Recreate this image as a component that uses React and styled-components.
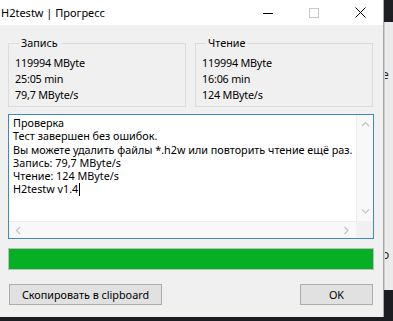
import React from "react";
import styled, { createGlobalStyle } from "styled-components";

const GlobalStyle = createGlobalStyle`
  html, body {
    margin: 0;
    padding: 0;
    background: #1c1d20;
  }
  * {
    box-sizing: border-box;
  }
`;

const writeStats = ["119994 MByte", "25:05 min", "79,7 MByte/s"];
const readStats = ["119994 MByte", "16:06 min", "124 MByte/s"];

const logLines = [
  "Проверка",
  "Тест завершен без ошибок.",
  "Вы можете удалить файлы *.h2w или повторить чтение ещё раз.",
  "Запись: 79,7 MByte/s",
  "Чтение: 124 MByte/s",
];

const Chevron = ({ dir }) => {
  const paths = {
    up: "M1 5 L4.5 1.5 L8 5",
    down: "M1 1.5 L4.5 5 L8 1.5",
    left: "M5 1 L1.5 4.5 L5 8",
    right: "M1.5 1 L5 4.5 L1.5 8",
  };
  const vertical = dir === "up" || dir === "down";
  return (
    <svg
      width={vertical ? 9 : 7}
      height={vertical ? 7 : 9}
      viewBox={vertical ? "0 0 9 7" : "0 0 7 9"}
      fill="none"
      stroke="#c2c2c2"
      strokeWidth="1.2"
    >
      <path d={paths[dir]} />
    </svg>
  );
};

const App = () => {
  return (
    <>
      <GlobalStyle />
      <Screen>
        <Window>
          <TitleBar>
            <Title>H2testw | Прогресс</Title>
            <CaptionButton>
              <svg width="10" height="10" viewBox="0 0 10 10">
                <path d="M0 5.5 H10" stroke="#000" strokeWidth="1" />
              </svg>
            </CaptionButton>
            <CaptionButton>
              <svg width="10" height="10" viewBox="0 0 10 10">
                <rect x="0.5" y="0.5" width="9" height="9" fill="none" stroke="#c8c8c8" />
              </svg>
            </CaptionButton>
            <CaptionButton>
              <svg width="11" height="11" viewBox="0 0 11 11">
                <path d="M0.5 0.5 L10.5 10.5 M10.5 0.5 L0.5 10.5" stroke="#000" strokeWidth="1" />
              </svg>
            </CaptionButton>
          </TitleBar>

          <Body>
            <GroupRow>
              <Group>
                <Legend>Запись</Legend>
                {writeStats.map((s) => (
                  <StatLine key={s}>{s}</StatLine>
                ))}
              </Group>
              <Group>
                <Legend>Чтение</Legend>
                {readStats.map((s) => (
                  <StatLine key={s}>{s}</StatLine>
                ))}
              </Group>
            </GroupRow>

            <Memo>
              <MemoText>
                {logLines.map((l) => (
                  <LogLine key={l}>{l}</LogLine>
                ))}
                <LogLine>
                  H2testw v1.4
                  <Caret />
                </LogLine>
              </MemoText>
              <VScroll>
                <Chevron dir="up" />
                <Chevron dir="down" />
              </VScroll>
              <HScroll>
                <Chevron dir="left" />
                <Chevron dir="right" />
              </HScroll>
              <Corner />
            </Memo>

            <Progress>
              <ProgressFill style={{ width: "100%" }} />
            </Progress>

            <ButtonRow>
              <Button $wide>Скопировать в clipboard</Button>
              <Button>OK</Button>
            </ButtonRow>
          </Body>
        </Window>

        <Backdrop>
          <BackdropTop />
          <BackdropPane>
            <PeekChar $top={46}>e</PeekChar>
            <PeekChar $top={226}>o</PeekChar>
          </BackdropPane>
        </Backdrop>
      </Screen>
    </>
  );
};

export default App;

const Screen = styled.div`
  display: flex;
  width: 393px;
  height: 321px;
  overflow: hidden;
  background: #1c1d20;
  font-family: "Segoe UI", "Noto Sans", sans-serif;
  font-size: 10.8px;
  color: #000;
`;

const Window = styled.div`
  width: 384px;
  height: 317px;
  flex-shrink: 0;
  display: flex;
  flex-direction: column;
  background: #f0f0f0;
  border-right: 1px solid #a9a9a9;
`;

const TitleBar = styled.div`
  height: 25px;
  display: flex;
  align-items: center;
  background: #ffffff;
`;

const Title = styled.div`
  flex: 1;
  padding-left: 1px;
  font-size: 11px;
  line-height: 25px;
  white-space: nowrap;
`;

const CaptionButton = styled.div`
  width: 46px;
  height: 25px;
  display: flex;
  align-items: center;
  justify-content: center;
`;

const Body = styled.div`
  flex: 1;
  display: flex;
  flex-direction: column;
  padding: 11px 9px 0 8px;
`;

const GroupRow = styled.div`
  display: grid;
  grid-template-columns: 178px 178px;
  column-gap: 9px;
`;

const Group = styled.fieldset`
  margin: 0;
  padding: 5px 0 3px 6px;
  border: 1px solid #dcdcdc;
  min-width: 0;
`;

const Legend = styled.legend`
  margin-left: 4px;
  padding: 0 3px 0 2px;
  line-height: 14px;
`;

const StatLine = styled.div`
  line-height: 16px;
  white-space: nowrap;
  letter-spacing: -0.2px;
`;

const Memo = styled.div`
  margin-top: 7px;
  height: 125px;
  width: 366px;
  display: grid;
  grid-template-columns: 1fr 17px;
  grid-template-rows: 1fr 17px;
  border: 1px solid #3c8cc0;
  background: #ffffff;
`;

const MemoText = styled.div`
  padding: 1px 0 0 4px;
  overflow: hidden;
`;

const LogLine = styled.div`
  height: 13.3px;
  line-height: 13.3px;
  white-space: nowrap;
  display: flex;
  align-items: center;
`;

const Caret = styled.span`
  display: inline-block;
  width: 1px;
  height: 13px;
  margin-left: 1px;
  background: #000;
`;

const VScroll = styled.div`
  display: flex;
  flex-direction: column;
  align-items: center;
  justify-content: space-between;
  padding: 6px 0 6px;
  background: #f8f8f8;
  border-left: 1px solid #ededed;
`;

const HScroll = styled.div`
  display: flex;
  align-items: center;
  justify-content: space-between;
  padding: 0 6px;
  background: #f8f8f8;
  border-top: 1px solid #ededed;
`;

const Corner = styled.div`
  background: #f0f0f0;
`;

const Progress = styled.div`
  margin-top: 9px;
  width: 366px;
  height: 22px;
  border: 1px solid #bcbcbc;
  background: #e6e6e6;
`;

const ProgressFill = styled.div`
  height: 100%;
  background: #06b025;
`;

const ButtonRow = styled.div`
  margin-top: 14px;
  width: 365px;
  display: flex;
  justify-content: space-between;
  padding-left: 1px;
`;

const Button = styled.div`
  width: ${(p) => (p.$wide ? "153px" : "73px")};
  height: 21px;
  display: flex;
  align-items: center;
  justify-content: center;
  background: #e1e1e1;
  border: 1px solid #adadad;
  white-space: nowrap;
`;

const Backdrop = styled.div`
  flex: 1;
  display: flex;
  flex-direction: column;
`;

const BackdropTop = styled.div`
  height: 22px;
  background: #1e1f23;
`;

const BackdropPane = styled.div`
  position: relative;
  height: 268px;
  background: #ebebeb;
  border-left: 1px solid #cfcfcf;
  overflow: hidden;
`;

const PeekChar = styled.span`
  position: absolute;
  top: ${(p) => p.$top}px;
  left: -3px;
  font-size: 12px;
  line-height: 14px;
  color: #222;
`;
